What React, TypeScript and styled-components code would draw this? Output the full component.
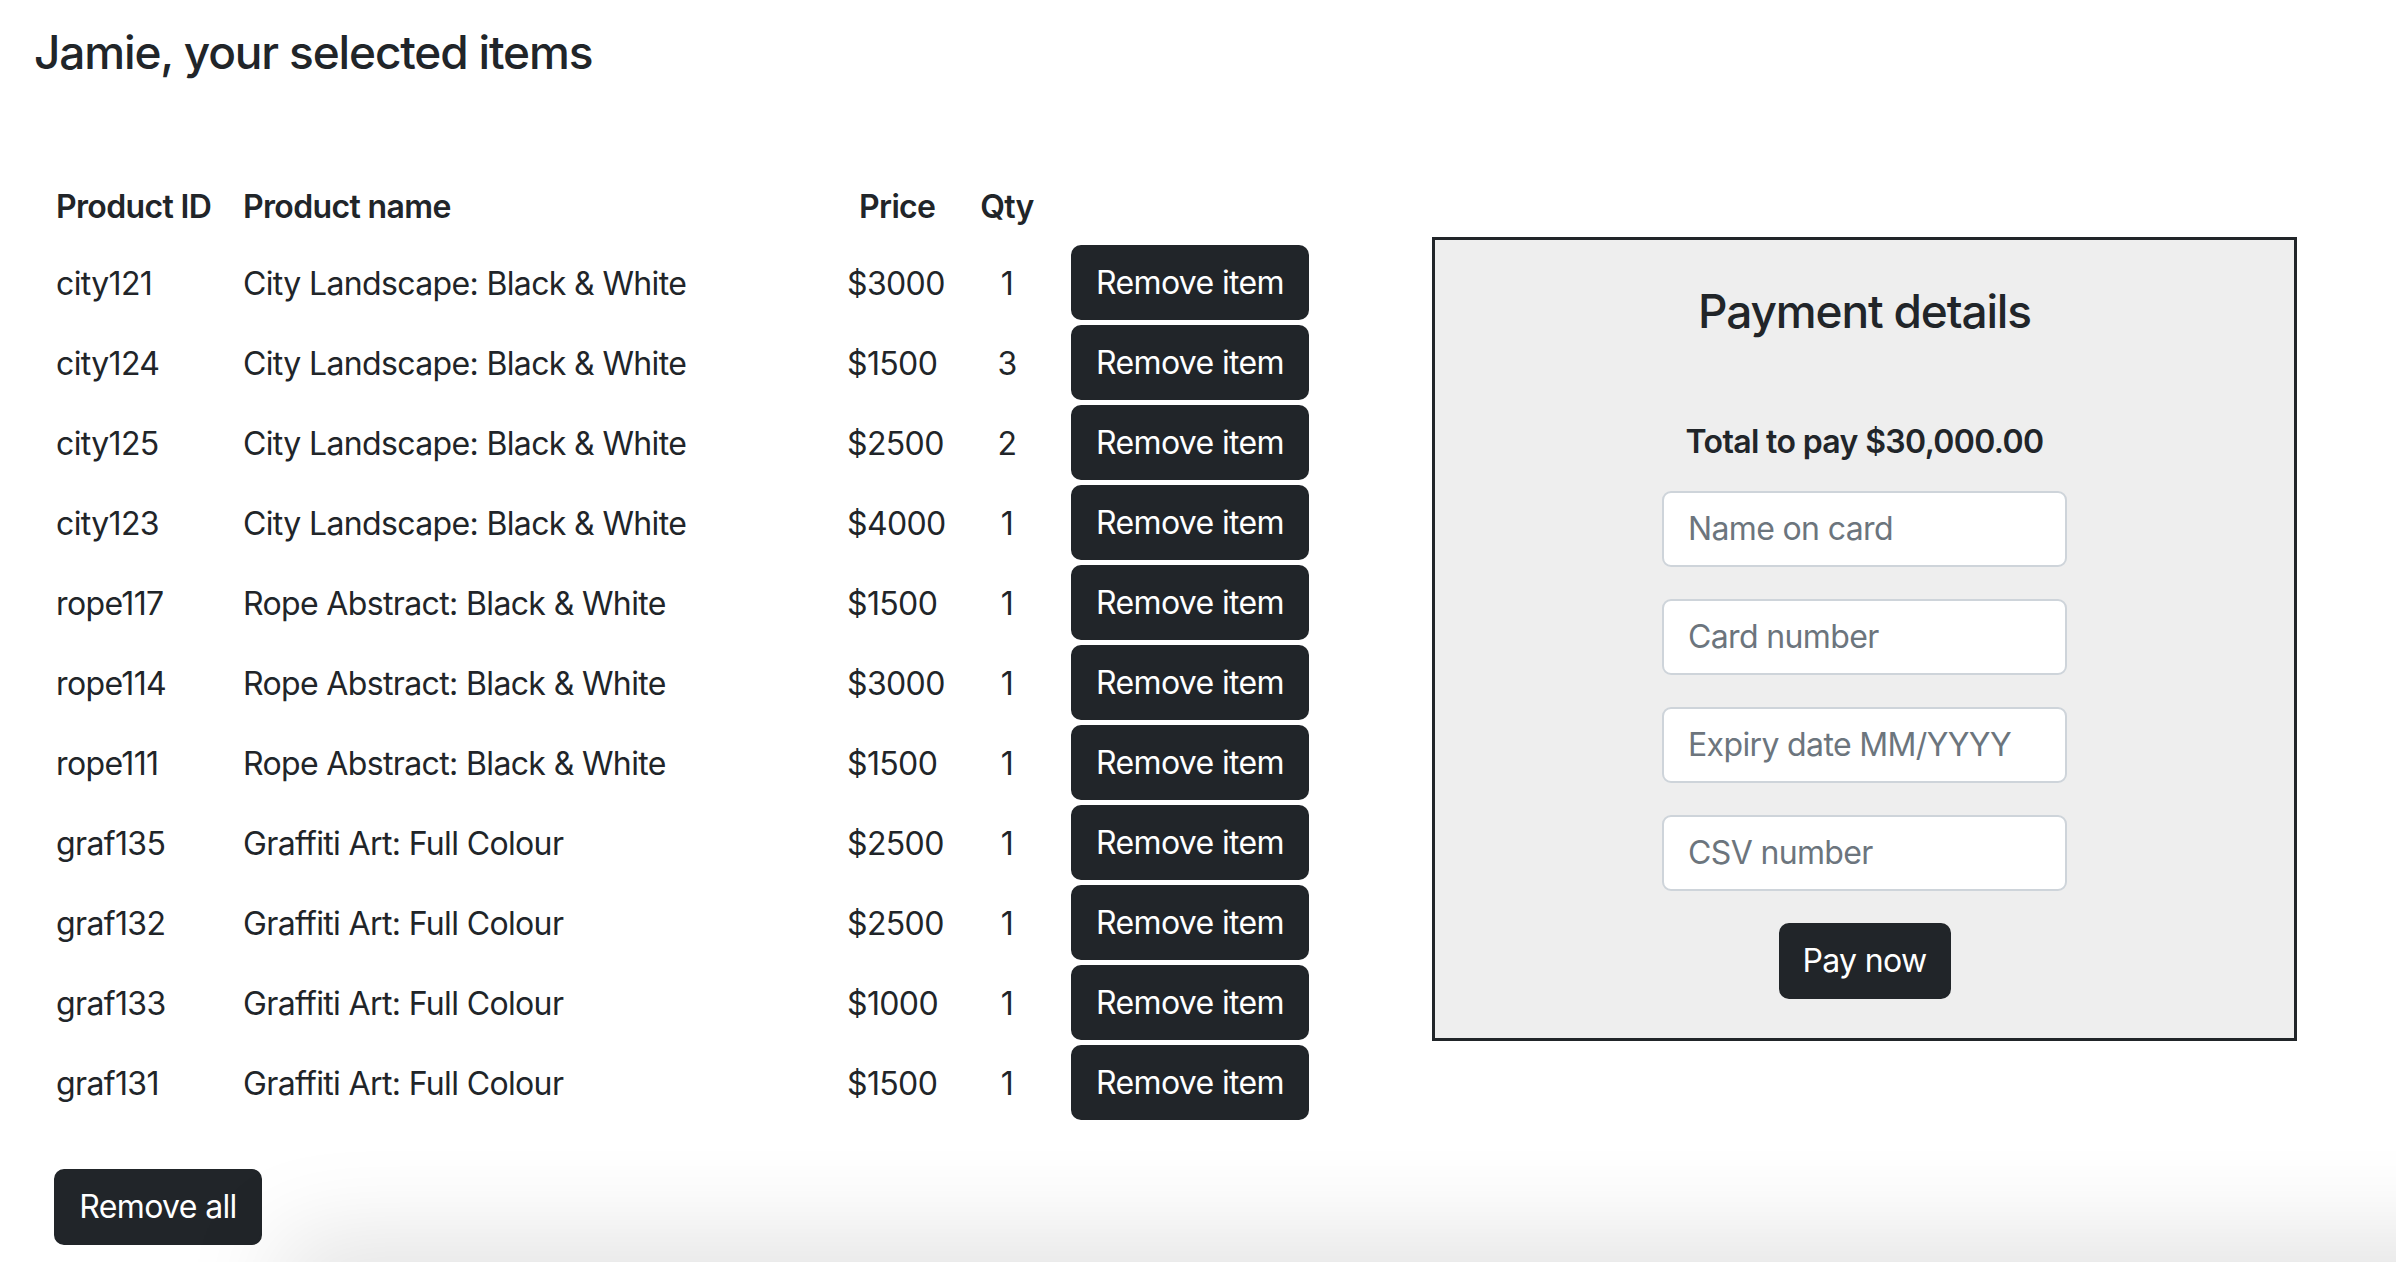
import React from "react";
import styled, { createGlobalStyle } from "styled-components";

const GlobalStyle = createGlobalStyle`
  html, body {
    margin: 0;
    padding: 0;
    background: #ffffff;
  }
  body {
    font-family: Inter, "Liberation Sans", Arial, sans-serif;
    color: #212529;
    font-size: 32px;
    line-height: 1.5;
    letter-spacing: -0.02em;
  }
  * { box-sizing: border-box; }
`;

const Page = styled.div`
  padding: 25px 0 0 34px;
`;

const Title = styled.h2`
  margin: 0;
  font-size: 46px;
  line-height: 1.2;
  font-weight: 500;
  letter-spacing: -0.025em;
`;

const Main = styled.div`
  display: flex;
  align-items: flex-start;
  gap: 107px;
  margin-top: 90px;
  margin-left: 6px;
`;

const CartColumn = styled.div`
  display: flex;
  flex-direction: column;
  align-items: flex-start;
`;

const Table = styled.table`
  border-collapse: collapse;
  table-layout: fixed;
  width: 1285px;
`;

const HeadCell = styled.th<{ $align?: string; $pad?: number }>`
  height: 74px;
  padding: 0 0 0 ${(p) => (p.$pad ?? 16)}px;
  font-weight: 600;
  text-align: ${(p) => p.$align || "left"};
  vertical-align: middle;
`;

const Cell = styled.td<{ $align?: string; $pad?: number }>`
  height: 80px;
  padding: 0 0 0 ${(p) => (p.$pad ?? 16)}px;
  text-align: ${(p) => p.$align || "left"};
  vertical-align: middle;
  white-space: nowrap;
`;

const DarkButton = styled.button`
  display: inline-flex;
  align-items: center;
  justify-content: center;
  height: 76px;
  padding: 0 24px;
  border: 2px solid #212529;
  border-radius: 10px;
  background: #212529;
  color: #ffffff;
  font-family: inherit;
  font-size: 32px;
  letter-spacing: -0.02em;
  line-height: 1.5;
  white-space: nowrap;
  cursor: pointer;
`;

const RemoveItemButton = styled(DarkButton)`
  width: 238px;
  height: 75px;
  margin-top: -3px;
`;

const RemoveAllButton = styled(DarkButton)`
  width: 208px;
  margin-top: 45px;
  margin-left: 14px;
`;

const PaymentBox = styled.section`
  width: 865px;
  margin-top: 67px;
  padding: 43px 0 39px;
  border: 3px solid #212529;
  background: #eeeeee;
  display: flex;
  flex-direction: column;
  align-items: center;
`;

const PaymentTitle = styled.h4`
  margin: 0 0 77px;
  font-size: 46px;
  line-height: 1.25;
  font-weight: 500;
  letter-spacing: -0.025em;
`;

const Total = styled.p`
  margin: 0 0 25px;
  font-weight: 600;
  line-height: 48px;
`;

const Field = styled.input`
  width: 405px;
  height: 76px;
  margin-bottom: 32px;
  padding: 0 24px;
  border: 2px solid #ced4da;
  border-radius: 9px;
  background: #ffffff;
  font-family: inherit;
  font-size: 32px;
  letter-spacing: -0.02em;
  color: #212529;
  outline: none;
  &::placeholder {
    color: #6c757d;
  }
`;

const PayButton = styled(DarkButton)`
  width: 172px;
`;

const BottomShade = styled.div`
  position: fixed;
  left: 300px;
  right: -200px;
  bottom: -60px;
  height: 60px;
  box-shadow: 0 0 100px 20px rgba(0, 0, 0, 0.13);
  pointer-events: none;
`;

type Item = { id: string; name: string; price: number; qty: number };

const items: Item[] = [
  { id: "city121", name: "City Landscape: Black & White", price: 3000, qty: 1 },
  { id: "city124", name: "City Landscape: Black & White", price: 1500, qty: 3 },
  { id: "city125", name: "City Landscape: Black & White", price: 2500, qty: 2 },
  { id: "city123", name: "City Landscape: Black & White", price: 4000, qty: 1 },
  { id: "rope117", name: "Rope Abstract: Black & White", price: 1500, qty: 1 },
  { id: "rope114", name: "Rope Abstract: Black & White", price: 3000, qty: 1 },
  { id: "rope111", name: "Rope Abstract: Black & White", price: 1500, qty: 1 },
  { id: "graf135", name: "Graffiti Art: Full Colour", price: 2500, qty: 1 },
  { id: "graf132", name: "Graffiti Art: Full Colour", price: 2500, qty: 1 },
  { id: "graf133", name: "Graffiti Art: Full Colour", price: 1000, qty: 1 },
  { id: "graf131", name: "Graffiti Art: Full Colour", price: 1500, qty: 1 },
];

export default function App() {
  return (
    <>
      <GlobalStyle />
      <Page>
        <Title>Jamie, your selected items</Title>
        <Main>
          <CartColumn>
            <Table>
              <colgroup>
                <col style={{ width: 187 }} />
                <col style={{ width: 604 }} />
                <col style={{ width: 128 }} />
                <col style={{ width: 96 }} />
                <col style={{ width: 270 }} />
              </colgroup>
              <thead>
                <tr>
                  <HeadCell>Product ID</HeadCell>
                  <HeadCell>Product name</HeadCell>
                  <HeadCell $pad={28}>Price</HeadCell>
                  <HeadCell $align="center" $pad={0}>Qty</HeadCell>
                  <HeadCell />
                </tr>
              </thead>
              <tbody>
                {items.map((it) => (
                  <tr key={it.id}>
                    <Cell>{it.id}</Cell>
                    <Cell>{it.name}</Cell>
                    <Cell>${it.price}</Cell>
                    <Cell $align="center" $pad={0}>{it.qty}</Cell>
                    <Cell>
                      <RemoveItemButton>Remove item</RemoveItemButton>
                    </Cell>
                  </tr>
                ))}
              </tbody>
            </Table>
            <RemoveAllButton>Remove all</RemoveAllButton>
          </CartColumn>
          <PaymentBox>
            <PaymentTitle>Payment details</PaymentTitle>
            <Total>Total to pay $30,000.00</Total>
            <Field placeholder="Name on card" />
            <Field placeholder="Card number" />
            <Field placeholder="Expiry date MM/YYYY" />
            <Field placeholder="CSV number" />
            <PayButton>Pay now</PayButton>
          </PaymentBox>
        </Main>
      </Page>
      <BottomShade />
    </>
  );
}
